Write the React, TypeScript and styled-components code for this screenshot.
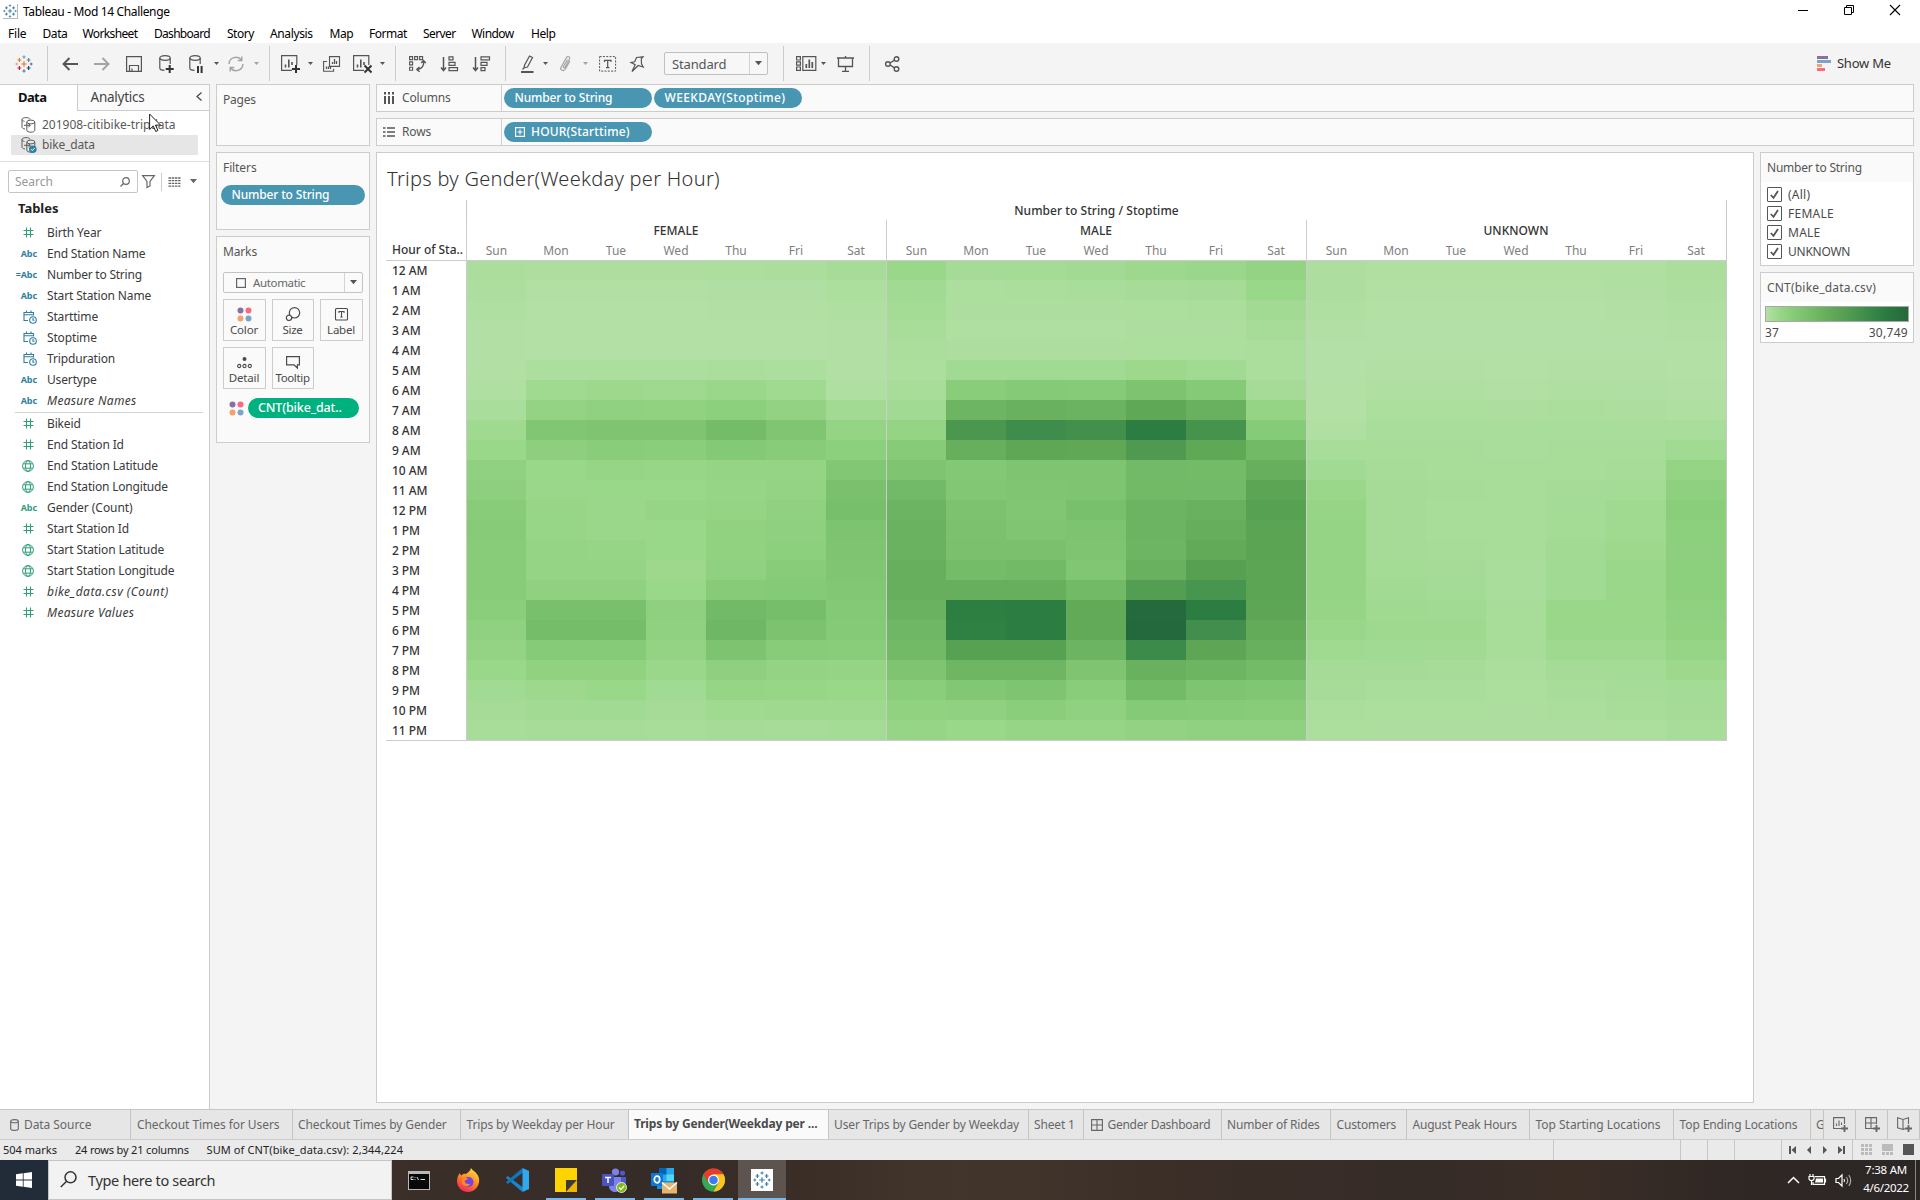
import React from 'react';
import styled, { createGlobalStyle, css } from 'styled-components';

const GlobalStyle = createGlobalStyle`
  * { box-sizing: border-box; }
  html, body { margin: 0; padding: 0; background: #fff; }
  body { font-family: "Noto Sans", "Open Sans", sans-serif; font-size: 12px; color: #333; overflow: hidden; }
  svg { display: block; flex: none; overflow: visible; }
`;

/* ---------- shared ---------- */

const Text = styled.span<{ $ls?: number; $size?: number; $weight?: number; $color?: string; $italic?: boolean }>`
  white-space: nowrap;
  letter-spacing: ${p => p.$ls ?? -0.15}px;
  font-size: ${p => p.$size ?? 12}px;
  font-weight: ${p => p.$weight ?? 400};
  ${p => p.$color && css`color: ${p.$color};`}
  ${p => p.$italic && css`font-style: italic;`}
`;

const Window = styled.div`
  position: relative;
  width: 1920px;
  height: 1200px;
  display: flex;
  flex-direction: column;
  background: #f4f4f4;
  overflow: hidden;
`;

/* ---------- title + menu ---------- */

const TitleBar = styled.header`
  height: 24px;
  background: #fff;
  display: flex;
  align-items: center;
  padding: 0 2px 2px 3px;
  color: #000;
`;
const TitleText = styled(Text)`margin-left: 5px; flex: 1;`;
const WindowButton = styled.div`
  width: 46px;
  height: 20px;
  align-self: flex-start;
  display: flex;
  align-items: center;
  justify-content: center;
`;
const AppBadge = styled.div`
  width: 15px;
  height: 15px;
  display: flex;
  align-items: center;
  justify-content: center;
  border-right: 1px solid #bbb;
  border-bottom: 1px solid #bbb;
`;
const MenuBar = styled.nav`
  height: 19px;
  background: #fff;
  display: flex;
  align-items: center;
  color: #000;
  padding-left: 8px;
`;
const MenuItem = styled(Text)<{ $w: number }>`width: ${p => p.$w}px;`;

/* ---------- toolbar ---------- */

const Toolbar = styled.div`
  height: 41px;
  display: flex;
  align-items: center;
  color: #555;
`;
const Tool = styled.div<{ $w: number; $ml?: number; $mr?: number; $faded?: boolean }>`
  width: ${p => p.$w}px;
  height: 24px;
  margin-left: ${p => p.$ml ?? 0}px;
  margin-right: ${p => p.$mr ?? 0}px;
  display: flex;
  align-items: center;
  justify-content: center;
  flex: none;
  opacity: ${p => (p.$faded ? 0.5 : 1)};
`;
const Divider = styled.div`
  width: 1px;
  height: 35px;
  background: #ccc;
  flex: none;
`;
const FitSelect = styled.div`
  width: 104px;
  height: 23px;
  margin-right: 15px;
  border: 1px solid #c0c0c0;
  border-radius: 2px;
  display: flex;
  align-items: center;
  background: #f7f7f7;
  padding: 0 0 0 7px;
`;
const SelectArrow = styled.div<{ $w: number }>`
  width: ${p => p.$w}px;
  height: 100%;
  margin-left: auto;
  border-left: 1px solid #d4d4d4;
  display: flex;
  align-items: center;
  justify-content: center;
  color: #555;
`;
const ShowMe = styled.div`
  margin-left: auto;
  margin-right: 29px;
  padding-bottom: 1px;
  display: flex;
  align-items: center;
  gap: 6px;
  color: #333;
`;

/* ---------- workspace ---------- */

const Workspace = styled.main`
  height: 1025px;
  display: flex;
`;
const DataPane = styled.aside`
  width: 210px;
  background: #fff;
  border-top: 1px solid #ccc;
  border-right: 1px solid #ccc;
  display: flex;
  flex-direction: column;
`;
const PaneTabs = styled.div`
  display: flex;
  height: 26px;
`;
const PaneTab = styled.div<{ $active?: boolean }>`
  width: ${p => (p.$active ? 77 : 132)}px;
  padding: 0 7px 2px ${p => (p.$active ? 18 : 12.5)}px;
  display: flex;
  align-items: center;
  justify-content: space-between;
  background: ${p => (p.$active ? '#fff' : '#fafafa')};
  color: ${p => (p.$active ? '#111' : '#444')};
  ${p => !p.$active && css`border-left: 1px solid #ccc; border-bottom: 1px solid #ccc;`}
`;
const Sources = styled.div`
  padding: 4px 11px 6px;
  border-bottom: 1px solid #ddd;
  height: 51px;
`;
const Source = styled.div<{ $active?: boolean }>`
  height: 20px;
  display: flex;
  align-items: center;
  gap: 6px;
  padding: 0 0 1px 10px;
  color: #5a5a5a;
  background: ${p => (p.$active ? '#e6e6e6' : 'transparent')};
`;
const SearchRow = styled.div`
  display: flex;
  align-items: center;
  height: 23px;
  margin: 8px 0 0 8px;
  color: #666;
`;
const SearchBox = styled.div`
  width: 130px;
  height: 23px;
  border: 1px solid #c4c4c4;
  border-radius: 2px;
  display: flex;
  align-items: center;
  justify-content: space-between;
  padding: 0 7px 0 6px;
  margin-right: 4px;
`;
const ThinRule = styled.div`width: 1px; height: 18px; background: #ccc; margin: 0 6px;`;
const TablesTitle = styled.div`
  height: 29px;
  display: flex;
  align-items: center;
  padding: 1px 0 0 18px;
  color: #222;
`;
const FieldRow = styled.div`
  height: 21px;
  display: flex;
  align-items: center;
  color: #3a3a3a;
`;
const FieldIcon = styled.div<{ $c: string }>`
  width: 47px;
  padding-right: 10px;
  display: flex;
  align-items: center;
  justify-content: flex-end;
  color: ${p => p.$c};
`;
const FieldSplit = styled.div`height: 1px; margin: 1px 6px 0 15px; background: #d4d4d4;`;

const CardColumn = styled.section`
  width: 154px;
  margin-left: 6px;
  display: flex;
  flex-direction: column;
  gap: 6px;
`;
const Card = styled.div<{ $h: number }>`
  height: ${p => p.$h}px;
  border: 1px solid #ccc;
  background: #fafafa;
  color: #555;
  padding: 6px;
`;
const CardTitle = styled.div`height: 17px; display: flex; align-items: center;`;
const FilterDrop = styled.div`margin: 9px -2px 0;`;
const Pill = styled.div<{ $w: number; $c?: string; $pl?: number }>`
  width: ${p => p.$w}px;
  height: 20px;
  border-radius: 10px;
  background: ${p => p.$c ?? '#4996b2'};
  color: #fff;
  display: flex;
  align-items: center;
  gap: 6px;
  padding: 0 0 1px ${p => p.$pl ?? 10.5}px;
`;
const MarkType = styled.div`
  height: 21px;
  margin-top: 12px;
  border: 1px solid #c4c4c4;
  border-radius: 2px;
  display: flex;
  align-items: center;
  padding-left: 12px;
  gap: 7px;
  color: #666;
`;
const MarkGrid = styled.div`
  display: grid;
  grid-template-columns: 43px 42px 43px;
  grid-auto-rows: 42px;
  gap: 6px;
  margin-top: 6px;
`;
const MarkButton = styled.div`
  border: 1px solid #ccc;
  display: flex;
  flex-direction: column;
  align-items: center;
  padding: 6px 1px 0 0;
  color: #4a4a4a;
`;
const MarkGlyph = styled.div`height: 16px; display: flex; align-items: center;`;
const MarkShelf = styled.div`
  display: flex;
  align-items: center;
  gap: 4px;
  margin: 9px 0 0 6px;
`;

const Sheet = styled.section`
  width: 1538px;
  margin-left: 6px;
  display: flex;
  flex-direction: column;
  gap: 6px;
`;
const Shelf = styled.div`
  height: 28px;
  border: 1px solid #ccc;
  background: #fafafa;
  display: flex;
  align-items: center;
  gap: 2px;
  color: #555;
`;
const ShelfLabel = styled.div`
  width: 125px;
  height: 100%;
  border-right: 1px solid #d0d0d0;
  display: flex;
  align-items: center;
  gap: 7px;
  padding: 0 0 1px 6px;
`;
const SheetBody = styled.div`display: flex; gap: 6px; height: 951px;`;
const View = styled.div`
  width: 1378px;
  border: 1px solid #ccc;
  background: #fff;
  padding-left: 9px;
`;
const ViewTitle = styled.h1`
  margin: 0;
  height: 47px;
  padding: 3px 0 0 1px;
  display: flex;
  align-items: center;
  font-weight: 300;
  color: #333;
`;
const Chart = styled.div`display: flex; width: 1341px;`;
const HourColumn = styled.div`width: 80px; padding-top: 40px;`;
const HourTitle = styled.div`
  height: 21px;
  padding: 0 0 1px 6px;
  display: flex;
  align-items: center;
  border-bottom: 1px solid #ccc;
`;
const Hour = styled.div<{ $first?: boolean; $last?: boolean }>`
  height: ${p => (p.$first ? 19 : p.$last ? 21 : 20)}px;
  padding-left: 6px;
  display: flex;
  align-items: center;
  ${p => p.$last && css`border-bottom: 1px solid #ccc;`}
`;
const Panes = styled.div`
  width: 1261px;
  border-right: 1px solid #c8c8c8;
`;
const AxisTitle = styled.div`
  height: 20px;
  border-left: 1px solid #c8c8c8;
  display: flex;
  align-items: center;
  justify-content: center;
`;
const Groups = styled.div`display: flex;`;
const Group = styled.div`width: 420px; border-left: 1px solid #ccc;`;
const GroupTitle = styled.div`
  height: 20px;
  padding-right: 1px;
  display: flex;
  align-items: center;
  justify-content: center;
`;
const Days = styled.div`
  display: grid;
  grid-template-columns: 59px repeat(6, 60px);
  height: 21px;
  padding-top: 1px;
  align-items: center;
  justify-items: center;
  border-bottom: 1px solid #ccc;
  color: #808080;
`;
const Heat = styled.div`
  display: grid;
  grid-template-columns: 59px repeat(6, 60px);
  grid-template-rows: 19px repeat(23, 20px);
  border-bottom: 1px solid #ccc;
`;

const Side = styled.div`width: 154px; display: flex; flex-direction: column; gap: 6px;`;
const SideCard = styled.div<{ $h: number }>`
  height: ${p => p.$h}px;
  border: 1px solid #ccc;
  background: #fff;
  color: #4a4a4a;
`;
const SideTitle = styled.div`
  height: 29px;
  padding-left: 6px;
  background: #fafafa;
  display: flex;
  align-items: center;
  color: #555;
`;
const CheckList = styled.div`padding: 3px 0 0 6px;`;
const CheckRow = styled.div`height: 19px; display: flex; align-items: center; gap: 6px;`;
const CheckBox = styled.div`
  width: 15px;
  height: 15px;
  border: 1px solid #555;
  border-radius: 1px;
  display: flex;
  align-items: center;
  justify-content: center;
  color: #555;
`;
const Ramp = styled.div`
  margin: 4px 4px 0;
  height: 16px;
  border: 1px solid #a8a8a8;
  background: linear-gradient(90deg, #b3e0a6, #98d687 10%, #85ca77 20%, #75bc69 32%, #67af5c 42%, #59a253 53%, #49964f 63%, #398949 73%, #2b7c40 84%, #256f3d 95%, #24693d);
`;
const RampLabels = styled.div`display: flex; justify-content: space-between; padding: 2px 5px 0 4px;`;

/* ---------- sheet tabs + status ---------- */

const TabStrip = styled.div`
  height: 31px;
  display: flex;
  background: #e6e6e6;
  border-top: 1px solid #c6c6c6;
  border-bottom: 1px solid #ccc;
  color: #666;
`;
const SheetTab = styled.div<{ $w: number; $pl: number; $active?: boolean }>`
  width: ${p => p.$w}px;
  flex: none;
  overflow: hidden;
  padding-left: ${p => p.$pl}px;
  border-right: 1px solid #c4c4c4;
  display: flex;
  align-items: center;
  gap: 5px;
  background: ${p => (p.$active ? '#fafafa' : 'transparent')};
  color: ${p => (p.$active ? '#4a4a4a' : 'inherit')};
  padding-bottom: ${p => (p.$active ? 2 : 0)}px;
`;
const StatusBar = styled.div`
  height: 20px;
  background: #eaeaea;
  display: flex;
  align-items: center;
  padding-left: 3px;
  color: #222;
`;
const StatusItem = styled(Text)<{ $w: number }>`width: ${p => p.$w}px; padding-bottom: 2px;`;
const StatusCell = styled.div<{ $w: number; $gap?: number; $pad?: number }>`
  width: ${p => p.$w}px;
  height: 20px;
  border-left: 1px solid #c6c6c6;
  display: flex;
  align-items: center;
  gap: ${p => p.$gap ?? 0}px;
  padding: 0 0 1px ${p => p.$pad ?? 0}px;
  color: #555;
`;

/* ---------- task bar ---------- */

const Taskbar = styled.footer`
  height: 40px;
  display: flex;
  background: linear-gradient(90deg, #3c2f29 20%, #352b27 34%, #3a2e27 42%, #42362c 50%, #3c2f28 60%, #352b27 74%, #3a2d26 82%, #302825 90%, #2b2626);
  color: #fff;
`;
const StartButton = styled.div`
  width: 48px;
  background: #212c38;
  display: flex;
  align-items: center;
  justify-content: center;
`;
const TaskSearch = styled.div`
  width: 344px;
  margin-right: 2px;
  background: #f2f2f2;
  border: 1px solid #c4c4c4;
  color: #333;
  display: flex;
  align-items: center;
  gap: 11px;
  padding: 0 0 1px 11px;
`;
const TaskApp = styled.div<{ $open?: boolean; $active?: boolean }>`
  width: ${p => (p.$active ? 48 : 49.1)}px;
  height: 40px;
  display: flex;
  align-items: center;
  justify-content: center;
  background: ${p =>
    p.$active
      ? 'linear-gradient(#76b9ed, #76b9ed) bottom / 100% 2px no-repeat #5d544f'
      : p.$open
        ? 'linear-gradient(#76b9ed, #76b9ed) bottom / 40px 2px no-repeat'
        : 'none'};
`;
const TableauTile = styled.div`
  width: 22px;
  height: 22px;
  background: #fff;
  display: flex;
  align-items: center;
  justify-content: center;
`;
const Tray = styled.div`
  margin-left: auto;
  display: flex;
  align-items: center;
  gap: 9px;
`;
const Clock = styled.div`
  width: 54px;
  margin-left: -3px;
  margin-right: -3px;
  padding: 0 0 2px 2px;
  display: flex;
  flex-direction: column;
  align-items: center;
  line-height: 18px;
`;
const PeekLine = styled.div`width: 5px; height: 40px; margin-left: -3px; border-left: 1px solid #8a8583;`;

const Pointer = styled.div`position: absolute; left: 149px; top: 113px;`;

/* ---------- icons ---------- */

type IconProps = { w: number; h: number; children: React.ReactNode; sw?: number };
const Icon = ({ w, h, children, sw = 1.2 }: IconProps) => (
  <svg width={w} height={h} viewBox={`0 0 ${w} ${h}`} fill="none" stroke="currentColor" strokeWidth={sw}>{children}</svg>
);

const Caret = ({ s = 5 }: { s?: number }) => (
  <svg width={s} height={s * 0.6} viewBox="0 0 10 6" fill="currentColor"><path d="M0 0h10L5 6z" /></svg>
);

const plus = (x: number, y: number, r: number) => `M${x - r} ${y}h${2 * r}M${x} ${y - r}v${2 * r}`;
const TableauMark = ({ size, mono }: { size: number; mono?: boolean }) => {
  const c = (v: string) => (mono ? '#3f7fa6' : v);
  return (
    <svg width={size} height={size} viewBox="0 0 18 18" fill="none" strokeWidth="1.2">
      <path d={plus(9, 9, 2.8)} stroke={c('#e8762b')} />
      <path d={plus(4.4, 5, 1.9)} stroke={c('#e8762b')} />
      <path d={plus(13.6, 5, 1.9)} stroke={c('#5b879b')} />
      <path d={plus(4.4, 13, 1.9)} stroke={c('#c72035')} />
      <path d={plus(13.6, 13, 1.9)} stroke={c('#1f457e')} />
      <path d={plus(9, 2, 1.6)} stroke={c('#5b9bb0')} strokeWidth="1" />
      <path d={plus(9, 16, 1.6)} stroke={c('#5b6591')} strokeWidth="1" />
      <path d={plus(1.8, 9, 1.4)} stroke={c('#e0a090')} strokeWidth="1" />
      <path d={plus(16.2, 9, 1.4)} stroke={c('#5b6591')} strokeWidth="1" />
    </svg>
  );
};

const Database = ({ mark }: { mark: 'plus' | 'pause' }) => (
  <Icon w={15} h={18}>
    <ellipse cx="6" cy="3" rx="5.2" ry="2.3" />
    <path d="M.8 3v10c0 1.3 2 2.3 4.7 2.3M11.2 3v6" />
    {mark === 'plus' ? <path d="M10.7 10v8M6.7 14h8" strokeWidth="2" stroke="#333" /> : <path d="M9 11v7M12.6 11v7" strokeWidth="2" stroke="#333" />}
  </Icon>
);

const ChartFrame = ({ mark }: { mark: 'plus' | 'cross' }) => (
  <Icon w={19} h={18}>
    <path d="M11 15.4H.6V.6h15.2V10" />
    <path d="M4.5 12.5v-3M7.8 12.5v-8M11 10V7" strokeWidth="1.6" />
    {mark === 'plus' ? <path d="M15 10v8M11 14h8" strokeWidth="2" stroke="#333" /> : <path d="M11.5 10.5l7 7M18.5 10.5l-7 7" strokeWidth="2" stroke="#333" />}
  </Icon>
);

const SourceIcon = ({ checked }: { checked?: boolean }) => (
  <Icon w={15} h={16} sw={1}>
    <path d="M9 2.5C9 1.4 7.2.6 5 .6S1 1.4 1 2.5V10c0 1 1 1.7 3 2M1 2.5c0 1 1 1.6 2.5 1.9" />
    <ellipse cx="9.8" cy="5" rx="4" ry="1.9" />
    <path d="M5.8 5v8.3c0 1 1.8 1.9 4 1.9s4-.9 4-1.9V5M3 8.3h6M7.3 6.5l2 1.8-2 2" />
    {checked && <><circle cx="11.8" cy="12.2" r="3.8" fill="#2f7f9f" stroke="none" /><path d="M10 12.2l1.3 1.4 2.4-2.6" stroke="#fff" /></>}
  </Icon>
);

const Hash = () => <Icon w={11} h={11} sw={1.1}><path d="M3.5.5v10M7.5.5v10M.5 3.5h10M.5 7.5h10" /></Icon>;
const Globe = () => (
  <Icon w={12} h={12} sw={1}><circle cx="6" cy="6" r="5.4" /><ellipse cx="6" cy="6" rx="2.5" ry="5.4" /><path d="M1.3 3.8h9.4M1.3 8.2h9.4" /></Icon>
);
const DateTime = () => (
  <Icon w={14} h={14} sw={1.1}>
    <path d="M5 10.5H1V2.5h9.5V5.500M1 4.8h9.500M3.500.5v2M8 .5v2" /><circle cx="10" cy="10" r="3.300" /><path d="M10 8v2.200h1.500" />
  </Icon>
);
const ColorDots = () => (
  <svg width="15" height="15"><circle cx="3.5" cy="3.5" r="3" fill="#8b6f9c" /><circle cx="11.5" cy="3.5" r="3" fill="#f9697f" /><circle cx="3.5" cy="11.5" r="3" fill="#f5a06e" /><circle cx="11.5" cy="11.5" r="3" fill="#7ba3cc" /></svg>
);
const TextBox = () => (
  <Icon w={13} h={13} sw={1.1}><rect x=".5" y=".5" width="12" height="11.5" rx="1" /><path d="M4 5V3.5h5V5M6.5 3.5V9M5.3 9h2.4" /></Icon>
);
const DashIcon = ({ add }: { add?: boolean }) => (
  <Icon w={add ? 16 : 12} h={add ? 15 : 12} sw={1.1}>
    {add ? <><path d="M11.5 7V.6H.6v10.900H8M.6 6h11M6 .6v11" /><path d="M11.5 8v7M8 11.5h7" strokeWidth="1.8" /></> : <path d="M.6.6h10.800v10.800H.6zM.6 6h11M6 .6v11" />}
  </Icon>
);

/* ---------- data ---------- */

const BLUE = '#2f7f9f';
const GREEN = '#2fa07a';
type Field = { icon: 'hash' | 'abc' | 'calc' | 'date' | 'geo'; name: string; ls?: number; italic?: boolean; green?: boolean };
const dimensions: Field[] = [
  { icon: 'hash', name: 'Birth Year', ls: -0.1, green: true },
  { icon: 'abc', name: 'End Station Name', ls: -0.19 },
  { icon: 'calc', name: 'Number to String', ls: -0.23 },
  { icon: 'abc', name: 'Start Station Name' },
  { icon: 'date', name: 'Starttime' },
  { icon: 'date', name: 'Stoptime' },
  { icon: 'date', name: 'Tripduration' },
  { icon: 'abc', name: 'Usertype' },
  { icon: 'abc', name: 'Measure Names', italic: true, ls: 0.3 },
];
const measures: Field[] = [
  { icon: 'hash', name: 'Bikeid' },
  { icon: 'hash', name: 'End Station Id' },
  { icon: 'geo', name: 'End Station Latitude' },
  { icon: 'geo', name: 'End Station Longitude', ls: -0.19 },
  { icon: 'abc', name: 'Gender (Count)', ls: -0.05 },
  { icon: 'hash', name: 'Start Station Id' },
  { icon: 'geo', name: 'Start Station Latitude', ls: -0.1 },
  { icon: 'geo', name: 'Start Station Longitude', ls: -0.12 },
  { icon: 'hash', name: 'bike_data.csv (Count)', italic: true, ls: 0.45 },
  { icon: 'hash', name: 'Measure Values', italic: true, ls: 0.3 },
];

const menus: [string, number, number][] = [
  ['File', 34.5, -0.2], ['Data', 40, -0.4], ['Worksheet', 71.5, -0.63], ['Dashboard', 73, -0.7], ['Story', 43, -0.5],
  ['Analysis', 59.5, -0.37], ['Map', 39.5, -0.4], ['Format', 54, -0.5], ['Server', 48.5, -0.6], ['Window', 59.5, -0.55], ['Help', 30, -0.4],
];

const dayNames = ['Sun', 'Mon', 'Tue', 'Wed', 'Thu', 'Fri', 'Sat'];
const hours = [...Array(24)].map((_, h) => `${h % 12 || 12} ${h < 12 ? 'AM' : 'PM'}`);

/* Intensity of each cell on the 0–19 steps of the palette, one line per hour. */
const parse = (s: string) => s.trim().split('\n').map(l => l.trim().split(/\s+/).map(Number));
const groups = [
  { name: 'FEMALE', rows: parse(`
    .6 .4 .4 .4 .5 .6 .9
    .4 .1 .1 .1 .2 .2 .5
    .3 .05 .05 .05 .1 .1 .3
    .15 .05 .05 .05 .05 .05 .15
    .1 .05 .05 .05 .05 .05 .1
    .1 .5 .5 .5 .6 .5 .1
    .3 1.4 1.6 1.5 1.8 1.4 .3
    .7 2.5 2.8 2.7 3.2 2.6 1.2
    1.4 4.6 4.9 4.8 6 4.7 2.4
    1.9 3.1 3.6 3.5 4.1 3.7 3.2
    2.9 1.9 2.1 2 2.3 2.3 4.5
    3.1 1.8 1.9 1.9 2.2 2.5 5.4
    3.7 2 1.8 2.1 2.4 2.8 5.6
    3.8 2 1.8 1.9 2.7 3 5
    3.7 2.3 2.1 1.9 2.7 3.2 4.8
    3.7 2.4 2.3 1.6 2.8 3.7 4.7
    3.7 2.9 2.8 1.9 3.8 4 4.4
    3.5 5.5 5.5 3 6.4 5.7 4.2
    2.9 5.9 5.9 2.8 6.8 5.1 4
    2.5 3.9 3.9 2.5 5 3.7 3.6
    1.9 2.7 2.7 1.8 3 2.5 2.3
    1.3 1.6 1.9 1.3 2.1 2 1.9
    1 1.2 1.3 1 1.4 1.5 1.5
    .8 .9 .9 .8 1 .9 1.1`) },
  { name: 'MALE', rows: parse(`
    1.9 1 1.1 1.2 1.6 1.8 2.5
    1.3 .5 .6 .7 .9 1 1.9
    1.1 .4 .4 .4 .5 .6 1.2
    .8 .3 .3 .3 .4 .4 .9
    .6 .4 .4 .4 .5 .5 .6
    .5 1.3 1.3 1.3 1.6 1.3 .6
    .8 3.6 4 3.9 5 4 1
    1.3 7.2 7.7 7.5 9.2 7.7 2.4
    2.4 11.8 13.3 12.8 15.8 12.5 3.9
    3.8 8 9.3 9.1 11.3 9.2 6.3
    4.9 4.3 4.9 4.9 6.4 6.1 8
    6.4 4.4 4.7 4.9 6.3 6.4 9.6
    7.3 5.1 4.6 5.5 7.3 7.7 10.2
    7.6 5.3 4.7 5 7.3 8.2 9.7
    7.6 5.4 5.4 4.8 7.2 8.9 9.7
    8 6 6.3 4.6 7.7 10.3 9.6
    8 8 8 6.3 10.7 12.1 9.6
    7.6 15.7 15.8 8.9 18.9 15.8 9.4
    6.8 15.3 15.8 8.9 19 13 8.7
    6.3 10.2 10.2 7.3 13.6 9.4 7.8
    4.8 7 7 4.9 7.7 7.1 6.2
    3.5 4.5 4.8 3.6 6.1 4.9 4.6
    2.7 2.9 3.4 2.9 4 3.9 3.7
    2.1 1.9 2.1 2.1 2.6 2.8 2.9`) },
  { name: 'UNKNOWN', rows: parse(`
    .4 .25 .25 .25 .25 .3 .6
    .4 .1 .1 .1 .1 .2 .4
    .3 .05 .05 .05 .05 .1 .3
    .1 0 0 0 0 .05 .15
    0 0 0 0 0 0 .05
    0 .1 .1 .05 .1 .1 .05
    .05 .3 .3 .1 .3 .2 .1
    .05 .5 .5 .4 .6 .4 .3
    .3 .7 .7 .7 .7 .7 .7
    .8 .8 .8 .7 .8 .8 1.3
    1.3 .9 .8 .8 .8 .9 2.3
    1.8 1 .9 .8 1 1.1 3
    2.1 1 .8 .8 1.1 1.4 3.4
    2.3 1 .8 .8 1.1 1.4 3.2
    2.4 1 .9 .8 1.2 1.6 3.1
    2.4 1.1 1 .7 1.3 1.8 3.2
    2.3 1.2 1.1 .7 1.3 1.8 3.2
    2.1 1.4 1.3 .8 1.9 1.9 2.9
    1.8 1.5 1.5 .8 1.8 1.8 2.7
    1.4 1.3 1.2 .8 1.5 1.5 2.2
    1 1 .9 .6 1 1.1 1.6
    .9 .7 .7 .5 .8 .9 1.1
    .6 .5 .5 .4 .6 .8 1
    .5 .4 .4 .4 .4 .5 .8`) },
];

const palette = ['b3e0a6', 'a5db96', '98d687', '8ed07f', '85ca77', '7dc370', '75bc69', '6eb663', '67af5c', '61a956', '59a253', '519c51', '49964f', '428f4d', '398949', '308344', '2b7c40', '27763d', '256f3d', '24693d']
  .map(h => [0, 2, 4].map(i => parseInt(h.slice(i, i + 2), 16)));
const shade = (v: number) => {
  const i = Math.min(18, Math.floor(v));
  const f = v - i;
  return `rgb(${palette[i].map((c, k) => Math.round(c + (palette[i + 1][k] - c) * f)).join(',')})`;
};

const sheetTabs: { name: string; w: number; pl: number; ls?: number; icon?: 'data' | 'dash'; active?: boolean }[] = [
  { name: 'Data Source', w: 131, pl: 10, ls: -0.07, icon: 'data' },
  { name: 'Checkout Times for Users', w: 162, pl: 6, ls: -0.07 },
  { name: 'Checkout Times by Gender', w: 168, pl: 5, ls: -0.1 },
  { name: 'Trips by Weekday per Hour', w: 168, pl: 5.5 },
  { name: 'Trips by Gender(Weekday per ...', w: 200, pl: 5, active: true, ls: -0.16 },
  { name: 'User Trips by Gender by Weekday', w: 200, pl: 5, ls: -0.12 },
  { name: 'Sheet 1', w: 55, pl: 5 },
  { name: 'Gender Dashboard', w: 138, pl: 6.5, ls: -0.28, icon: 'dash' },
  { name: 'Number of Rides', w: 109, pl: 5 },
  { name: 'Customers', w: 76, pl: 5.5 },
  { name: 'August Peak Hours', w: 123, pl: 5.5, ls: -0.2 },
  { name: 'Top Starting Locations', w: 144, pl: 5.5, ls: -0.02 },
  { name: 'Top Ending Locations', w: 137, pl: 5.5, ls: -0.1 },
  { name: 'G', w: 13, pl: 5 },
];

/* ---------- pieces ---------- */

const FieldGlyph = ({ icon }: { icon: Field['icon'] }) => {
  if (icon === 'hash') return <Tool $w={11} $mr={3}><Hash /></Tool>;
  if (icon === 'geo') return <Tool $w={12} $mr={3}><Globe /></Tool>;
  if (icon === 'date') return <DateTime />;
  return <Text $size={9} $weight={700} $ls={-0.1}>{icon === 'calc' ? '=Abc' : 'Abc'}</Text>;
};

const FieldList = ({ fields, color }: { fields: Field[]; color: string }) => (
  <>
    {fields.map(f => (
      <FieldRow key={f.name}>
        <FieldIcon $c={f.green ? GREEN : color}><FieldGlyph icon={f.icon} /></FieldIcon>
        <Text $ls={f.ls} $italic={f.italic}>{f.name}</Text>
      </FieldRow>
    ))}
  </>
);

const TopToolbar = () => (
  <Toolbar>
    <Tool $w={47}><TableauMark size={18} /></Tool>
    <Divider />
    <Tool $w={44}><Icon w={16} h={14} sw={1.9}><path d="M16 7H1.5M7.5 1l-6 6 6 6" /></Icon></Tool>
    <Tool $w={20} $faded><Icon w={16} h={14} sw={1.9}><path d="M0 7h14.5M8.500 1l6 6-6 6" /></Icon></Tool>
    <Tool $w={44}><Icon w={16} h={16}><path d="M.6.6h14.800v14.800H.6zM3.500 15V9.500h9V15M6 15v-2.500" /></Icon></Tool>
    <Tool $w={20}><Database mark="plus" /></Tool>
    <Tool $w={40}><Database mark="pause" /></Tool>
    <Tool $w={0}><Caret /></Tool>
    <Tool $w={40} $faded>
      <Icon w={18} h={16} sw={1.4}><path d="M2 8a7 7 0 0 1 12.500-4M16 8A7 7 0 0 1 3.500 12M14.800.5v4h-4M3.200 15.500v-4h4" /></Icon>
    </Tool>
    <Tool $w={0} $mr={13} $faded><Caret /></Tool>
    <Divider />
    <Tool $w={40}><ChartFrame mark="plus" /></Tool>
    <Tool $w={1}><Caret /></Tool>
    <Tool $w={41}>
      <Icon w={17} h={16} sw={1.1}>
        <path d="M6.500.6h10v9.800h-10zM4 5.500H.6v9.800h10v-2.500" /><path d="M9.500 8V6M11.500 8V3M13.500 8V5M3.500 13v-2.500M5.500 13v-2.500M7.500 13v-2.500" strokeWidth="1.3" />
      </Icon>
    </Tool>
    <Tool $w={20}><ChartFrame mark="cross" /></Tool>
    <Tool $w={21} $mr={2}><Caret /></Tool>
    <Divider />
    <Tool $w={42}>
      <Icon w={17} h={16} sw={1.1}>
        <path d="M.6.6h3v3h-3zM5.600.6h3v3h-3zM10.600.6h3v3h-3zM.6 5.900h3v3h-3zM.6 11.200h3v3h-3z" /><path d="M14.500 5c1 4-1.500 8-6 8.500M12.200 7l2.300-2.500L16.800 7M10.500 11l-2.700 2.500 2.800 2.300" strokeWidth="1.4" />
      </Icon>
    </Tool>
    <Tool $w={22}>
      <Icon w={17} h={16}><path d="M2.500 1v13M0 11.500l2.500 3 2.500-3" strokeWidth="1.5" /><path d="M8 .8h4v3H8zM8 6.300h6v3H8zM8 11.700h8.500v3H8z" /></Icon>
    </Tool>
    <Tool $w={43} $mr={2}>
      <Icon w={17} h={16}><path d="M2.500 1v13M0 11.500l2.500 3 2.500-3" strokeWidth="1.5" /><path d="M8 .8h8.500v3H8zM8 6.300h6v3H8zM8 11.700h4v3H8z" /></Icon>
    </Tool>
    <Divider />
    <Tool $w={30} $ml={7}>
      <Icon w={14} h={18}><path d="M8.500 1l3 1.500L6.500 12l-3.500.8.5-2.500zM3 12.800l-1.500 1.700" /><path d="M0 17h12.500" strokeWidth="2" /></Icon>
    </Tool>
    <Tool $w={5}><Caret /></Tool>
    <Tool $w={34} $faded>
      <Icon w={14} h={17}><path d="M12 6L7 14.500c-1.500 2.300-5.300.5-4-2.200L8.500 2.500c1.200-2 4-.5 3 1.500L7 12.300c-.7 1-2.200.3-1.600-.8L9.500 4.500" /></Icon>
    </Tool>
    <Tool $w={7} $faded><Caret /></Tool>
    <Tool $w={37}>
      <Icon w={18} h={16}><rect x=".6" y=".6" width="16" height="14.5" strokeDasharray="2 1.3" strokeWidth="1" /><path d="M5.500 6V4.300H12V6M8.700 4.300v7.400M7 11.700h3.400" /></Icon>
    </Tool>
    <Tool $w={22} $mr={16}>
      <Icon w={14} h={16}><path d="M6.500 1.500l6.500-.7-1.700 2 .2 5 1.700 3.200-5-1.500L2 15.500l3.200-6.700L1 6.500l3.700-.7z" /></Icon>
    </Tool>
    <FitSelect><Text $size={13} $color="#555">Standard</Text><SelectArrow $w={18}><Caret s={7} /></SelectArrow></FitSelect>
    <Divider />
    <Tool $w={30} $ml={7}>
      <Icon w={20} h={15}><path d="M.6.6h3.800v3.400H.6zM.6 5.800h3.800v3.400H.6zM.6 11h3.800v3.400H.6zM6.800.6h13v13.800h-13z" /><path d="M10.300 12V8M13.300 12V3.500M16.300 12V6" strokeWidth="1.7" /></Icon>
    </Tool>
    <Tool $w={5}><Caret /></Tool>
    <Tool $w={39} $mr={4}>
      <Icon w={17} h={16} sw={1.3}><path d="M0 2h17M1.500 2v8.500h14V2M8.500 0v2M8.500 10.500V15M5 15.300h7" /></Icon>
    </Tool>
    <Divider />
    <Tool $w={45}>
      <Icon w={15} h={16} sw={1.4}><circle cx="2.9" cy="8" r="2.3" /><circle cx="11.5" cy="3" r="2.3" /><circle cx="11.5" cy="13" r="2.3" /><path d="M5 7l4.500-2.800M5 9l4.500 2.800" /></Icon>
    </Tool>
    <ShowMe>
      <svg width="14" height="15"><path d="M0 0h11v3H0z" fill="#8b6f9c" /><path d="M0 4h14v3H0z" fill="#7ba3cc" /><path d="M0 8h5v3H0z" fill="#f5a06e" /><path d="M0 12h8v3H0z" fill="#f9697f" /></svg>
      <Text $size={13} $ls={-0.2}>Show Me</Text>
    </ShowMe>
  </Toolbar>
);

const LeftPane = () => (
  <DataPane>
    <PaneTabs>
      <PaneTab $active><Text $size={13} $weight={700} $ls={-0.6}>Data</Text></PaneTab>
      <PaneTab><Text $size={13.5} $ls={-0.25}>Analytics</Text><Icon w={6} h={9}><path d="M5.500.5L1 4.500l4.500 4" /></Icon></PaneTab>
    </PaneTabs>
    <Sources>
      <Source><SourceIcon /><Text $ls={-0.01}>201908-citibike-tripdata</Text></Source>
      <Source $active><SourceIcon checked /><Text>bike_data</Text></Source>
    </Sources>
    <SearchRow>
      <SearchBox>
        <Text $ls={0} $color="#999">Search</Text>
        <Icon w={10} h={10}><circle cx="6" cy="4" r="3.3" /><path d="M3.500 6.500l-3 3" /></Icon>
      </SearchBox>
      <Icon w={13} h={13}><path d="M.6.6h11.800L8 6.500V11l-3 1.500v-6z" /></Icon>
      <ThinRule />
      <Icon w={13} h={10} sw={1.3}><path d="M.5 1h12M.5 3.700h12M.5 6.400h12M.5 9.100h12" strokeDasharray="2.5 .7" /></Icon>
      <Tool $w={24}><Caret s={7} /></Tool>
    </SearchRow>
    <TablesTitle><Text $size={13} $weight={700} $ls={-0.03}>Tables</Text></TablesTitle>
    <FieldList fields={dimensions} color={BLUE} />
    <FieldSplit />
    <FieldList fields={measures} color={GREEN} />
  </DataPane>
);

const Cards = () => (
  <CardColumn>
    <Card $h={62}><CardTitle><Text $ls={-0.22}>Pages</Text></CardTitle></Card>
    <Card $h={78}>
      <CardTitle><Text $ls={-0.1}>Filters</Text></CardTitle>
      <FilterDrop><Pill $w={144}><Text $weight={500}>Number to String</Text></Pill></FilterDrop>
    </Card>
    <Card $h={207}>
      <CardTitle><Text>Marks</Text></CardTitle>
      <MarkType>
        <Icon w={10} h={10}><rect x=".6" y=".6" width="8.8" height="8.8" /></Icon>
        <Text $size={11.5} $ls={-0.35}>Automatic</Text>
        <SelectArrow $w={18}><Caret s={7} /></SelectArrow>
      </MarkType>
      <MarkGrid>
        <MarkButton><MarkGlyph><ColorDots /></MarkGlyph><Text $size={11.5}>Color</Text></MarkButton>
        <MarkButton><MarkGlyph><Icon w={14} h={14}><circle cx="8.5" cy="5.8" r="5.2" /><circle cx="3" cy="10.8" r="2.7" fill="#fafafa" /></Icon></MarkGlyph><Text $size={11.5} $ls={-0.3}>Size</Text></MarkButton>
        <MarkButton><MarkGlyph><TextBox /></MarkGlyph><Text $size={11.5} $ls={-0.25}>Label</Text></MarkButton>
        <MarkButton>
          <MarkGlyph><Icon w={15} h={11} sw={1.1}><circle cx="7.5" cy="2" r="2" fill="currentColor" stroke="none" /><circle cx="2.2" cy="9" r="1.6" /><circle cx="7.5" cy="9" r="1.6" /><circle cx="12.8" cy="9" r="1.6" /></Icon></MarkGlyph>
          <Text $size={11.5}>Detail</Text>
        </MarkButton>
        <MarkButton>
          <MarkGlyph><Icon w={14} h={13}><path d="M.6.6h12.800v8.200h-2v3.200L8 8.800H.6z" /></Icon></MarkGlyph>
          <Text $size={11.5} $ls={-0.35}>Tooltip</Text>
        </MarkButton>
      </MarkGrid>
      <MarkShelf><ColorDots /><Pill $w={111} $c="#00b180" $pl={10}><Text $size={12.5} $weight={500}>CNT(bike_dat..</Text></Pill></MarkShelf>
    </Card>
  </CardColumn>
);

const Worksheet = () => (
  <Sheet>
    <Shelf>
      <ShelfLabel><Icon w={12} h={12} sw={2}><path d="M2 0v2.500M6 0v2.500M10 0v2.500M2 4v8M6 4v8M10 4v8" /></Icon><Text $ls={-0.18}>Columns</Text></ShelfLabel>
      <Pill $w={148}><Text $weight={500}>Number to String</Text></Pill>
      <Pill $w={148}><Text $weight={500} $ls={0.38}>WEEKDAY(Stoptime)</Text></Pill>
    </Shelf>
    <Shelf>
      <ShelfLabel><Icon w={12} h={10} sw={1.7}><path d="M0 1h2.500M4 1h8M0 5h2.500M4 5h8M0 9h2.500M4 9h8" /></Icon><Text>Rows</Text></ShelfLabel>
      <Pill $w={148} $pl={11}><Icon w={10} h={10} sw={1.1}><path d="M.6.6h8.800v8.800H.6zM2.500 5h5M5 2.500v5" /></Icon><Text $weight={500} $ls={0.17}>HOUR(Starttime)</Text></Pill>
    </Shelf>
    <SheetBody>
      <View>
        <ViewTitle><Text $size={20} $weight={300} $ls={0.29}>Trips by Gender(Weekday per Hour)</Text></ViewTitle>
        <Chart>
          <HourColumn>
            <HourTitle><Text $weight={500} $ls={-0.03}>Hour of Sta..</Text></HourTitle>
            {hours.map((h, i) => <Hour key={h} $first={i === 0} $last={i === 23}><Text $weight={500} $ls={-0.06}>{h}</Text></Hour>)}
          </HourColumn>
          <Panes>
            <AxisTitle><Text $weight={500} $ls={0.05}>Number to String / Stoptime</Text></AxisTitle>
            <Groups>
              {groups.map(g => (
                <Group key={g.name}>
                  <GroupTitle><Text $weight={500} $ls={0}>{g.name}</Text></GroupTitle>
                  <Days>{dayNames.map(d => <Text key={d} $ls={0}>{d}</Text>)}</Days>
                  <Heat>{g.rows.flatMap((row, r) => row.map((v, c) => <div key={`${r}-${c}`} style={{ background: shade(v) }} />))}</Heat>
                </Group>
              ))}
            </Groups>
          </Panes>
        </Chart>
      </View>
      <Side>
        <SideCard $h={114}>
          <SideTitle><Text $ls={-0.23}>Number to String</Text></SideTitle>
          <CheckList>
            {['(All)', 'FEMALE', 'MALE', 'UNKNOWN'].map(n => (
              <CheckRow key={n}>
                <CheckBox><Icon w={9} h={9} sw={1.8}><path d="M.8 5l2.700 2.800L8 1" /></Icon></CheckBox>
                <Text $ls={n === 'UNKNOWN' ? -0.25 : 0.25}>{n}</Text>
              </CheckRow>
            ))}
          </CheckList>
        </SideCard>
        <SideCard $h={71}>
          <SideTitle><Text $ls={0.2}>CNT(bike_data.csv)</Text></SideTitle>
          <Ramp />
          <RampLabels><Text $ls={0.1}>37</Text><Text $ls={0.29}>30,749</Text></RampLabels>
        </SideCard>
      </Side>
    </SheetBody>
  </Sheet>
);

const BottomTabs = () => (
  <TabStrip>
    {sheetTabs.map(t => (
      <SheetTab key={t.name} $w={t.w} $pl={t.pl} $active={t.active}>
        {t.icon === 'data' && <Icon w={9} h={12} sw={1.1}><ellipse cx="4.5" cy="2.2" rx="3.8" ry="1.6" /><path d="M.7 2.200v7.500c0 1 1.600 1.700 3.800 1.700s3.800-.7 3.800-1.700V2.200" /></Icon>}
        {t.icon === 'dash' && <DashIcon />}
        <Text $weight={t.active ? 700 : 400} $ls={t.ls}>{t.name}</Text>
      </SheetTab>
    ))}
    <SheetTab $w={32} $pl={9}>
      <Icon w={16} h={15} sw={1.1}><path d="M11.500 7V.6H.6v10.900H8M3.500 9V6.500M6 9V3.500M8.500 8V5.500" /><path d="M11.500 8v7M8 11.500h7" strokeWidth="1.8" /></Icon>
    </SheetTab>
    <SheetTab $w={32} $pl={9}><DashIcon add /></SheetTab>
    <SheetTab $w={32} $pl={9}>
      <Icon w={16} h={15} sw={1.1}><path d="M11.500 7V.8L6 2.500.6.8v10L6 12.500l2-.7M6 2.500v10" /><path d="M11.500 8v7M8 11.500h7" strokeWidth="1.8" /></Icon>
    </SheetTab>
  </TabStrip>
);

const Status = () => (
  <StatusBar>
    <StatusItem $w={72} $size={11} $ls={0.02}>504 marks</StatusItem>
    <StatusItem $w={131.5} $size={11} $ls={-0.17}>24 rows by 21 columns</StatusItem>
    <StatusItem $w={1346.5} $size={11} $ls={0.11}>SUM of CNT(bike_data.csv): 2,344,224</StatusItem>
    <StatusCell $w={127} /><StatusCell $w={27} /><StatusCell $w={27} /><StatusCell $w={47} />
    <StatusCell $w={71} $gap={8} $pad={7}>
      <svg width="8" height="8" fill="currentColor"><path d="M0 0h2v8H0zM7 0v8L2.500 4z" /></svg>
      <svg width="8" height="8" fill="currentColor"><path d="M6 0v8L2 4z" /></svg>
      <svg width="8" height="8" fill="currentColor"><path d="M2 0v8l4-4z" /></svg>
      <svg width="8" height="8" fill="currentColor"><path d="M1 0v8l4.500-4zM6 0h2v8H6z" /></svg>
    </StatusCell>
    <StatusCell $w={67} $gap={10} $pad={8}>
      <svg width="11" height="11" fill="#bbb"><path d="M0 0h3v3H0zM4 0h3v3H4zM8 0h3v3H8zM0 4h3v3H0zM4 4h3v3H4zM8 4h3v3H8zM0 8h3v3H0zM4 8h3v3H4zM8 8h3v3H8z" /></svg>
      <svg width="11" height="11" fill="#bbb"><path d="M0 0h11v7H0zM0 8h3v3H0zM4 8h3v3H4zM8 8h3v3H8z" /></svg>
      <svg width="11" height="11" fill="#555"><path d="M0 0h11v11H0z" /></svg>
    </StatusCell>
  </StatusBar>
);

const TaskbarRow = () => (
  <Taskbar>
    <StartButton><svg width="16" height="16" fill="#fff"><path d="M0 2.300L6.800 1.300V7.600H0zM7.600 1.200L16 0v7.600H7.600zM0 8.400h6.800v6.300L0 13.700zM7.600 8.400H16V16l-8.400-1.200z" /></svg></StartButton>
    <TaskSearch>
      <Icon w={17} h={17} sw={1.5}><circle cx="10.5" cy="6.3" r="5.5" /><path d="M6.600 10.200L.8 16" /></Icon>
      <Text $size={14.5} $ls={-0.33}>Type here to search</Text>
    </TaskSearch>
    <TaskApp>
      <svg width="22" height="19"><rect width="22" height="19" fill="#b8b8b8" /><rect x="1" y="3" width="20" height="15" fill="#080808" /><path d="M3 6h2.500M3 6v2.500h2.500M7 6v.8M7 8v.8M9 6l1.500 3M12.500 8.500H17" stroke="#ddd" fill="none" /></svg>
    </TaskApp>
    <TaskApp>
      <svg width="24" height="24" viewBox="0 0 24 24">
        <defs><linearGradient id="fx" x1=".8" y1="0" x2=".3" y2="1"><stop offset="0" stopColor="#ffe14a" /><stop offset=".5" stopColor="#ff8a1f" /><stop offset="1" stopColor="#f0255e" /></linearGradient></defs>
        <path d="M15 0c1 2 4 3.500 5.500 5.500C23 8.500 23.500 11 23 14.500 22 20 17.500 24 12 24 6 24 1 19.500 1 13c0-3 1-6 3-8 0 1 .5 2 1.500 2.500C6.500 6 8.500 5.500 10 6c2-1.500 4.500-3 5-6z" fill="url(#fx)" />
        <circle cx="12.5" cy="14" r="5" fill="#7542e5" /><path d="M6 11c2-2 4.500-1.500 6.500 0-2 0-2.500 1.500-4 2 .5 2.500 3 4 6 2.500-1.500 3-5.500 3.500-7.500 1C5.500 15 5.500 12.500 6 11z" fill="#ff8a1f" />
      </svg>
    </TaskApp>
    <TaskApp>
      <svg width="24" height="24" viewBox="0 0 24 24"><path d="M17.500 24L.8 9.800 2.800 8 18 19.500z" fill="#1787d4" /><path d="M17.500 0L.8 14.200 2.800 16 18 4.500z" fill="#1276bd" /><path d="M17.500 0L24 3v18l-6.500 3z" fill="#2fa8f0" /></svg>
    </TaskApp>
    <TaskApp $open>
      <svg width="22" height="24"><path d="M0 0h22v12L11 24H0z" fill="#fdd400" /><path d="M11 24V12h11z" fill="#3a3a3a" /><path d="M11 24L22 12v12z" fill="#f3b400" /></svg>
    </TaskApp>
    <TaskApp $open>
      <svg width="25" height="25" viewBox="0 0 25 25"><circle cx="13.5" cy="4" r="3.6" fill="#7b83eb" /><circle cx="20.5" cy="5" r="2.6" fill="#5059c9" /><path d="M15 9h9v7c0 3-2 5-5 5h-4z" fill="#5059c9" /><path d="M7 9h12v9c0 3.500-2.500 6-6 6s-6-2.500-6-6z" fill="#7b83eb" /><rect y="6" width="12" height="12" rx="1" fill="#4b53bc" /><path d="M3 9.500h6M6 9.500V15" stroke="#fff" strokeWidth="1.5" /><circle cx="19.5" cy="19.5" r="5" fill="#7cba10" stroke="#fff" strokeWidth=".8" /><path d="M17 19.500l2 2 3.200-3.800" stroke="#fff" fill="none" strokeWidth="1.4" /></svg>
    </TaskApp>
    <TaskApp $open>
      <svg width="26" height="27" viewBox="0 0 26 27"><path d="M8 1h15v13H8z" fill="#28a8ea" /><path d="M8 1h7.500v6.500H8z" fill="#0364b8" /><path d="M15.500 7.500H23V14h-7.500z" fill="#50d9ff" /><path d="M6 14h17v8H6z" fill="#1490df" /><rect y="6" width="12" height="13" rx="1" fill="#0f78d4" /><ellipse cx="6" cy="12.5" rx="2.7" ry="3.3" fill="none" stroke="#fff" strokeWidth="1.7" /><rect x="11" y="15.5" width="15" height="11" fill="#e8b36f" /><path d="M11 15.500l7.500 6.500 7.500-6.500" fill="none" stroke="#fff" strokeWidth="1.4" /></svg>
    </TaskApp>
    <TaskApp $open>
      <svg width="23" height="24" viewBox="0 0 24 24"><circle cx="12" cy="12" r="12" fill="#34a853" /><path d="M12 12L1.600 6A12 12 0 0 1 22.400 6z" fill="#ea3a2c" /><path d="M12 6h10.400A12 12 0 0 1 12 24l5.200-9z" fill="#fcc31e" /><path d="M1.600 6L6.800 15 12 6z" fill="#ea3a2c" /><circle cx="12" cy="12" r="5.7" fill="#fff" /><circle cx="12" cy="12" r="4.5" fill="#3b7ded" /></svg>
    </TaskApp>
    <TaskApp $active>
      <TableauTile><TableauMark size={18} mono /></TableauTile>
    </TaskApp>
    <Tray>
      <Icon w={13} h={8} sw={1.5}><path d="M1 7l5.500-5.500L12 7" /></Icon>
      <Icon w={17} h={12}><path d="M6 2.600h9.500v7.800H4V8M15.500 5h1v3h-1M1 0v2.500M4 0v2.500M0 2.500h5v2c0 1.500-1 2-2.500 2s-2.500-.5-2.500-2zM2.500 6.500V11" /><path d="M7 4.500h7v4H6z" fill="currentColor" stroke="none" /></Icon>
      <Icon w={17} h={13}><path d="M1 4.500h2.500L7 1v11L3.500 8.500H1z" /><path d="M9 5c.7 1 .7 2 0 3" /><path d="M11.300 3c1.600 2 1.600 5 0 7M13.800 1.200c2.500 3 2.500 7.600 0 10.600" opacity=".6" /></Icon>
      <Clock><Text $size={11.5} $ls={-0.25}>7:38 AM</Text><Text $size={11.5} $ls={-0.3}>4/6/2022</Text></Clock>
      <PeekLine />
    </Tray>
  </Taskbar>
);

export default function App() {
  return (
    <>
      <GlobalStyle />
      <Window>
        <TitleBar>
          <AppBadge><TableauMark size={14} mono /></AppBadge>
          <TitleText $ls={-0.35}>Tableau - Mod 14 Challenge</TitleText>
          <WindowButton><Icon w={10} h={10} sw={1}><path d="M0 5.500h10" /></Icon></WindowButton>
          <WindowButton><Icon w={10} h={10} sw={1}><path d="M.5 2.500h7v7h-7zM2.500 2.500v-2h7v7h-2" /></Icon></WindowButton>
          <WindowButton><Icon w={10} h={10} sw={1.1}><path d="M0 0l10 10M10 0L0 10" /></Icon></WindowButton>
        </TitleBar>
        <MenuBar>{menus.map(([name, w, ls]) => <MenuItem key={name} $w={w} $ls={ls}>{name}</MenuItem>)}</MenuBar>
        <TopToolbar />
        <Workspace>
          <LeftPane />
          <Cards />
          <Worksheet />
        </Workspace>
        <BottomTabs />
        <Status />
        <TaskbarRow />
        <Pointer>
          <svg width="12" height="20" viewBox="0 0 12 20"><path d="M.6 1v15.500l3.700-3.600 2.400 5.600 2.200-1-2.400-5.400h5z" fill="#fff" stroke="#222" strokeWidth="1" /></svg>
        </Pointer>
      </Window>
    </>
  );
}
